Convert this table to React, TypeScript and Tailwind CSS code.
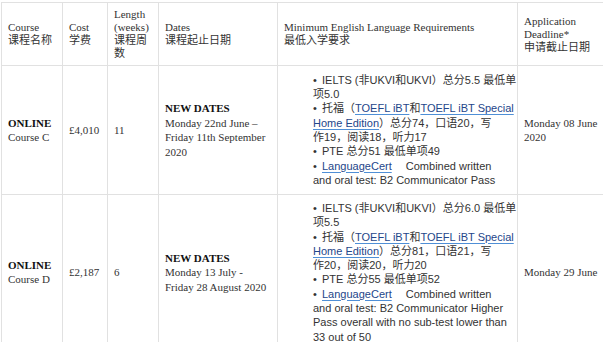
import React from 'react';

const serif = 'font-["Liberation_Serif","Noto_Sans_CJK_SC",serif]';
const sans = 'font-["Liberation_Sans","Noto_Sans_CJK_SC",sans-serif]';

function Link({ children }: { children: React.ReactNode }) {
  return (
    <a className="text-[#24468a] underline decoration-[#4f8fd6] underline-offset-2">{children}</a>
  );
}

function Bullet() {
  return <span className="mr-[5px] inline-block w-[4px]">•</span>;
}

type Course = {
  name: string;
  cost: string;
  weeks: string;
  dates: string[];
  reqs: React.ReactNode[];
  deadline: React.ReactNode;
};

const courses: Course[] = [
  {
    name: 'Course C',
    cost: '£4,010',
    weeks: '11',
    dates: ['Monday 22nd June –', 'Friday 11th September', '2020'],
    reqs: [
      <><Bullet />IELTS (非UKVI和UKVI）总分5.5 最低单</>,
      <>项5.0</>,
      <><Bullet />托福（<Link>TOEFL iBT</Link>和<Link>TOEFL iBT Special </Link></>,
      <><Link>Home Edition</Link>）总分74，口语20，写</>,
      <>作19，阅读18，听力17</>,
      <><Bullet />PTE 总分51 最低单项49</>,
      <><Bullet /><Link>LanguageCert</Link>{'\u3000 '}Combined written</>,
      <>and oral test: B2 Communicator Pass</>,
    ],
    deadline: (
      <>
        Monday 08 June
        <br />
        2020
      </>
    ),
  },
  {
    name: 'Course D',
    cost: '£2,187',
    weeks: '6',
    dates: ['Monday 13 July -', 'Friday 28 August 2020'],
    reqs: [
      <><Bullet />IELTS (非UKVI和UKVI）总分6.0 最低单</>,
      <>项5.5</>,
      <><Bullet />托福（<Link>TOEFL iBT</Link>和<Link>TOEFL iBT Special </Link></>,
      <><Link>Home Edition</Link>）总分81，口语21，写</>,
      <>作20，阅读20，听力20</>,
      <><Bullet />PTE 总分55 最低单项52</>,
      <><Bullet /><Link>LanguageCert</Link>{'\u3000 '}Combined written</>,
      <>and oral test: B2 Communicator Higher</>,
      <>Pass overall with no sub-test lower than</>,
      <>33 out of 50</>,
    ],
    deadline: 'Monday 29 June',
  },
];

const th = 'border border-[#e1e1e1] px-[6px] py-[4px] text-left align-middle font-normal';
const td = 'border border-[#e1e1e1] px-[6px] py-[6px] align-middle';

export default function App() {
  return (
    <div className="h-[342px] w-full overflow-hidden bg-white">
      <table className={`mt-[2px] ml-[1px] w-[640px] table-fixed border-collapse text-[11px] text-[#333] ${serif}`}>
        <colgroup>
          <col className="w-[61px]" />
          <col className="w-[45px]" />
          <col className="w-[51px]" />
          <col className="w-[119px]" />
          <col className="w-[240px]" />
          <col className="w-[124px]" />
        </colgroup>
        <thead>
          <tr className="h-[63px] leading-[13px]">
            <th className={th}>
              Course
              <br />
              课程名称
            </th>
            <th className={th}>
              Cost
              <br />
              学费
            </th>
            <th className={th}>Length (weeks) 课程周数</th>
            <th className={th}>
              Dates
              <br />
              课程起止日期
            </th>
            <th className={th}>
              Minimum English Language Requirements
              <br />
              最低入学要求
            </th>
            <th className={th}>
              <div className="w-[78px]">
                Application Deadline*
                <br />
                申请截止日期
              </div>
            </th>
          </tr>
        </thead>
        <tbody className="leading-[14.5px]">
          {courses.map(c => (
            <tr key={c.name} className="h-[129px]">
              <td className={td}>
                <b className="text-[#111]">ONLINE</b>
                <br />
                {c.name}
              </td>
              <td className={td}>{c.cost}</td>
              <td className={td}>{c.weeks}</td>
              <td className={td}>
                <b className="text-[#111]">NEW DATES</b>
                {c.dates.map(d => (
                  <div key={d}>{d}</div>
                ))}
              </td>
              <td className={`${td} ${sans}`}>
                <div className="flex flex-col pl-[29px] leading-[14.3px]">
                  {c.reqs.map((r, i) => (
                    <div key={i} className="whitespace-nowrap">
                      {r}
                    </div>
                  ))}
                </div>
              </td>
              <td className={td}>
                <div className="w-[78px]">{c.deadline}</div>
              </td>
            </tr>
          ))}
        </tbody>
      </table>
    </div>
  );
}
